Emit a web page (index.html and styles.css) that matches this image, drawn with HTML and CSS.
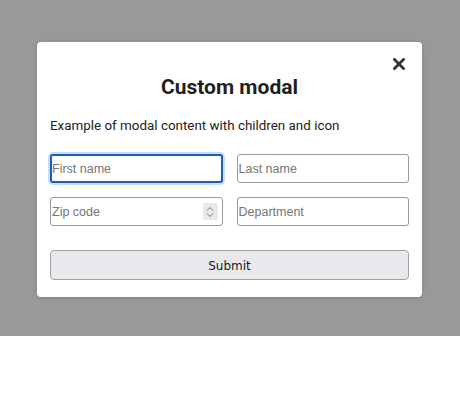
FILE: index.html
```html
<!DOCTYPE html>
<html>
<head>
<meta charset="utf-8">
<link rel="stylesheet" href="styles.css">
</head>
<body>
<div class="overlay">
  <div class="modal">
    <button class="close" aria-label="Close">
      <svg width="12" height="12" viewBox="0 0 12 12"><path d="M1.5 1.5 L10.5 10.5 M10.5 1.5 L1.5 10.5" stroke="#333" stroke-width="2.8" stroke-linecap="square"/></svg>
    </button>
    <h2 class="title">Custom modal</h2>
    <p class="text">Example of modal content with children and icon</p>
    <form class="form">
      <input class="field focused" type="text" placeholder="First name">
      <input class="field" type="text" placeholder="Last name">
      <div class="field number">
        <input class="inner" type="text" placeholder="Zip code">
        <span class="spin">
          <svg width="8" height="12" viewBox="0 0 8 12"><path d="M1 4.5 L4 1.5 L7 4.5 M1 7.5 L4 10.5 L7 7.5" fill="none" stroke="#777" stroke-width="1"/></svg>
        </span>
      </div>
      <input class="field" type="text" placeholder="Department">
      <button class="submit" type="button">Submit</button>
    </form>
  </div>
</div>
</body>
</html>
```

FILE: styles.css
```css
html, body {
  margin: 0;
  padding: 0;
  background: #fff;
}
.overlay {
  height: 336px;
  background: #999999;
  display: flex;
  justify-content: center;
  align-items: flex-start;
  padding: 42px 1px 0 0;
  box-sizing: border-box;
}
.modal {
  position: relative;
  width: 385px;
  box-sizing: border-box;
  background: #fff;
  border-radius: 4px;
  box-shadow: 0 1px 4px rgba(0,0,0,0.15);
  padding: 33px 13px 17px;
  font-family: Roboto, "Liberation Sans", sans-serif;
  color: #222;
}
.close {
  position: absolute;
  top: 16px;
  right: 17px;
  border: 0;
  background: none;
  padding: 0;
  width: 12px;
  height: 12px;
  display: flex;
}
.title {
  margin: 0;
  font-size: 21px;
  line-height: 24px;
  font-weight: 700;
  text-align: center;
  color: #1f1f1f;
}
.text {
  margin: 17px 0 0;
  font-size: 13.4px;
  line-height: 20px;
  color: #222;
}
.form {
  margin-top: 18px;
  display: grid;
  grid-template-columns: 1fr 1fr;
  column-gap: 14px;
  row-gap: 14px;
}
.field {
  height: 29px;
  box-sizing: border-box;
  border: 1px solid #9a9a9a;
  border-radius: 3px;
  padding: 0 1px;
  font-family: "Liberation Sans", Arial, sans-serif;
  font-size: 12.5px;
  color: #222;
  background: #fff;
  outline: none;
  min-width: 0;
  width: 100%;
}
.field::placeholder, .inner::placeholder {
  color: #757575;
}
.focused {
  border: 2px solid #1a5fb4;
  padding: 0;
  box-shadow: 0 0 0 2px #c8dcf3;
}
.number {
  display: flex;
  align-items: center;
  padding: 0 3px 0 1px;
}
.inner {
  flex: 1;
  min-width: 0;
  border: 0;
  outline: none;
  padding: 0;
  font-family: "Liberation Sans", Arial, sans-serif;
  font-size: 12.5px;
  background: transparent;
}
.spin {
  width: 15px;
  height: 17px;
  margin-right: 1px;
  background: #e9e9ed;
  border-radius: 2px;
  display: flex;
  align-items: center;
  justify-content: center;
}
.submit {
  grid-column: 1 / 3;
  margin-top: 10px;
  height: 30px;
  border: 1px solid #a0a0a8;
  border-radius: 4px;
  background: #e9e9ed;
  font-family: Tahoma, "DejaVu Sans", "Liberation Sans", sans-serif;
  font-size: 12px;
  color: #1a1a1a;
  padding-top: 2px;
}
```
